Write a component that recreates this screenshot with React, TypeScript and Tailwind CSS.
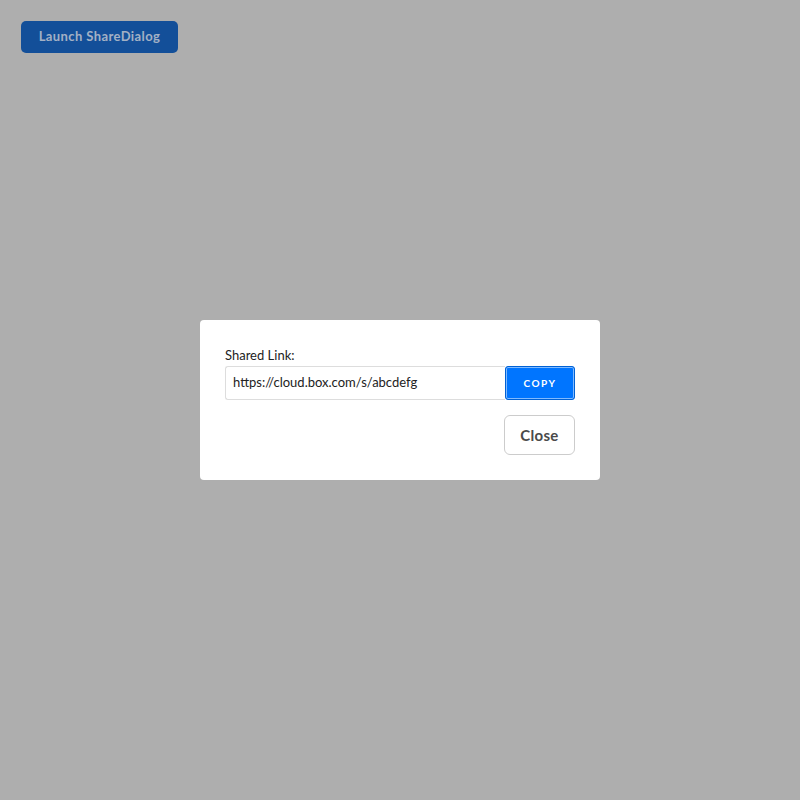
export default function App() {
  return (
    <div className="relative w-[800px] h-[800px] bg-[#aeaeae] font-['Lato','Liberation_Sans',sans-serif]">
      <div className="p-[21px]">
        <button className="h-[32px] w-[157px] rounded-[5px] bg-[#134f99] text-[13px] font-bold tracking-[0.4px] text-[#a3b1c5]">
          Launch ShareDialog
        </button>
      </div>

      {/* modal */}
      <div className="absolute left-[200px] top-[320px] w-[400px] h-[160px] rounded-[4px] bg-white px-[25px] pt-[27px]">
        <label className="block text-[13px] leading-[16px] text-[#222]">Shared Link:</label>
        <div className="mt-[3px] flex h-[34px]">
          <div className="flex-1 flex items-center rounded-l-[3px] border border-[#ddd] border-r-0 pl-[7px] text-[13px] text-[#222]">
            https://cloud.box.com/s/abcdefg
          </div>
          <button className="w-[70px] rounded-[3px] border border-[#0061d5] bg-[#0075ff] text-[10px] font-bold tracking-[1.5px] text-white shadow-[inset_0_0_0_1px_#ffffff80]">
            COPY
          </button>
        </div>
        <div className="mt-[15px] flex justify-end">
          <button className="h-[40px] w-[71px] rounded-[6px] border border-[#ccc] bg-white text-[15px] font-bold tracking-[0.3px] text-[#4a4a4a]">
            Close
          </button>
        </div>
      </div>
    </div>
  );
}
